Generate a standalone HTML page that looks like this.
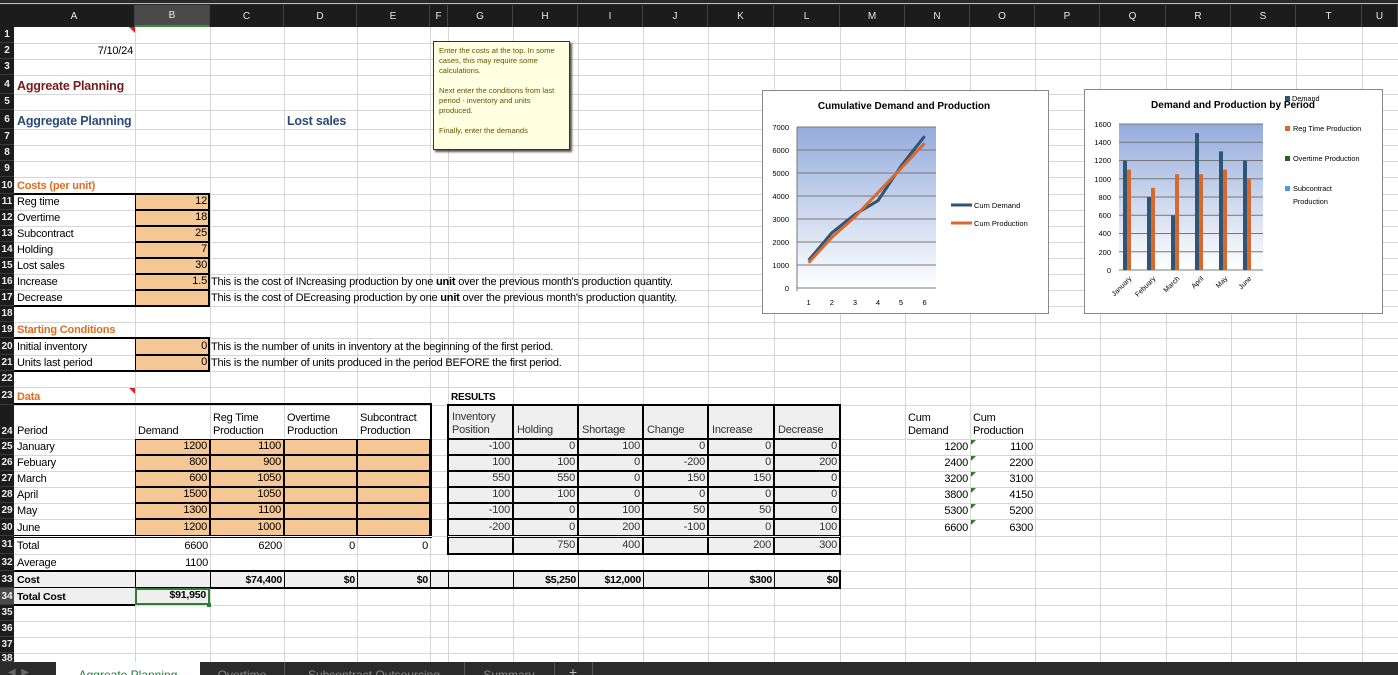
<!DOCTYPE html>
<html><head><meta charset="utf-8">
<style>
*{margin:0;padding:0}
body{width:1398px;height:675px;overflow:hidden;background:#fff;position:relative;font-family:"Liberation Sans Narrow","Liberation Sans",sans-serif;color:#000}
.a{position:absolute}
.vl{position:absolute;top:27px;height:635px;width:1px;background:#d6d6d6}
.hl{position:absolute;left:14px;width:1384px;height:1px;background:#d6d6d6}
.c{position:absolute;box-sizing:border-box;display:flex;align-items:flex-end;padding:0 2px 1px 3px;font-size:11px;white-space:nowrap;line-height:13px;overflow:visible;letter-spacing:-0.2px}
.r{justify-content:flex-end}
.b{font-weight:bold}
.o{background:#f5c794;border:1px solid #000}
.g{background:#efefef;border:1px solid #000;color:#333}
.cA{left:14px;width:121px}.cB{left:135px;width:75px}.cC{left:210px;width:74px}.cD{left:284px;width:73px}.cE{left:357px;width:73px}.cF{left:430px;width:18px}.cG{left:448px;width:65px}.cH{left:513px;width:65px}.cI{left:578px;width:65px}.cJ{left:643px;width:65px}.cK{left:708px;width:66px}.cL{left:774px;width:66px}.cN{left:905px;width:65px}.cO{left:970px;width:65px}
.r1{top:27px;height:16px}.r2{top:43px;height:16px}.r3{top:59px;height:16px}.r4{top:75px;height:19px}.r5{top:94px;height:16px}.r6{top:110px;height:19px}.r7{top:129px;height:16px}.r8{top:145px;height:16px}.r9{top:161px;height:16px}.r10{top:177px;height:17px}
.r11{top:194px;height:16px}.r12{top:210px;height:16px}.r13{top:226px;height:16px}.r14{top:242px;height:16px}.r15{top:258px;height:16px}.r16{top:274px;height:16px}.r17{top:290px;height:16px}.r18{top:306px;height:16px}.r19{top:322px;height:16px}.r20{top:338px;height:17px}.r21{top:355px;height:16px}.r22{top:371px;height:16px}.r23{top:387px;height:18px}.r24{top:405px;height:34px}
.r25{top:439px;height:16px}.r26{top:455px;height:16px}.r27{top:471px;height:16px}.r28{top:487px;height:16px}.r29{top:503px;height:16px}.r30{top:519px;height:17px}.r31{top:536px;height:18px}.r32{top:554px;height:17px}.r33{top:571px;height:17px}.r34{top:588px;height:17px}.r35{top:605px;height:16px}.r36{top:621px;height:16px}.r37{top:637px;height:16px}.r38{top:653px;height:9px}
.rh{position:absolute;left:0;width:14px;background:#1c1c1c;color:#eee;font-size:10px;font-weight:bold;display:flex;align-items:center;justify-content:center;box-sizing:border-box;border-bottom:1px solid #3a3a3a}
.ch{position:absolute;top:5px;height:22px;background:#1c1c1c;color:#e8e8e8;font-size:10px;display:flex;align-items:center;justify-content:center;box-sizing:border-box;border-right:1px solid #444}
.hd{align-items:flex-start;flex-direction:column;justify-content:flex-end}
.gt{position:absolute;width:0;height:0;border-top:5px solid #2e7d1e;border-right:5px solid transparent}
</style></head><body>
<div class="a" style="left:0;top:0;width:1398px;height:5px;background:#2a2a2a"></div>
<div class="a" style="left:0;top:3px;width:1398px;height:1px;background:#bbb"></div>
<div class="vl" style="left:135px"></div><div class="vl" style="left:210px"></div><div class="vl" style="left:284px"></div><div class="vl" style="left:357px"></div><div class="vl" style="left:430px"></div><div class="vl" style="left:448px"></div><div class="vl" style="left:513px"></div><div class="vl" style="left:578px"></div><div class="vl" style="left:643px"></div><div class="vl" style="left:708px"></div><div class="vl" style="left:774px"></div><div class="vl" style="left:840px"></div><div class="vl" style="left:905px"></div><div class="vl" style="left:970px"></div><div class="vl" style="left:1035px"></div><div class="vl" style="left:1100px"></div><div class="vl" style="left:1166px"></div><div class="vl" style="left:1231px"></div><div class="vl" style="left:1296px"></div><div class="vl" style="left:1362px"></div>
<div class="hl" style="top:43px"></div><div class="hl" style="top:59px"></div><div class="hl" style="top:75px"></div><div class="hl" style="top:94px"></div><div class="hl" style="top:110px"></div><div class="hl" style="top:129px"></div><div class="hl" style="top:145px"></div><div class="hl" style="top:161px"></div><div class="hl" style="top:177px"></div><div class="hl" style="top:194px"></div><div class="hl" style="top:210px"></div><div class="hl" style="top:226px"></div><div class="hl" style="top:242px"></div><div class="hl" style="top:258px"></div><div class="hl" style="top:274px"></div><div class="hl" style="top:290px"></div><div class="hl" style="top:306px"></div><div class="hl" style="top:322px"></div><div class="hl" style="top:338px"></div><div class="hl" style="top:355px"></div><div class="hl" style="top:371px"></div><div class="hl" style="top:387px"></div><div class="hl" style="top:405px"></div><div class="hl" style="top:439px"></div><div class="hl" style="top:455px"></div><div class="hl" style="top:471px"></div><div class="hl" style="top:487px"></div><div class="hl" style="top:503px"></div><div class="hl" style="top:519px"></div><div class="hl" style="top:536px"></div><div class="hl" style="top:554px"></div><div class="hl" style="top:571px"></div><div class="hl" style="top:588px"></div><div class="hl" style="top:605px"></div><div class="hl" style="top:621px"></div><div class="hl" style="top:637px"></div><div class="hl" style="top:653px"></div>
<div class="a" style="left:0;top:5px;width:14px;height:22px;background:#1c1c1c"></div>
<div class="ch" style="left:14px;width:121px">A</div>
<div class="ch" style="left:135px;width:75px;background:#4a4a4a;border-bottom:2px solid #3c8a3c">B</div>
<div class="ch" style="left:210px;width:74px">C</div><div class="ch" style="left:284px;width:73px">D</div><div class="ch" style="left:357px;width:73px">E</div><div class="ch" style="left:430px;width:18px">F</div><div class="ch" style="left:448px;width:65px">G</div><div class="ch" style="left:513px;width:65px">H</div><div class="ch" style="left:578px;width:65px">I</div><div class="ch" style="left:643px;width:65px">J</div><div class="ch" style="left:708px;width:66px">K</div><div class="ch" style="left:774px;width:66px">L</div><div class="ch" style="left:840px;width:65px">M</div><div class="ch" style="left:905px;width:65px">N</div><div class="ch" style="left:970px;width:65px">O</div><div class="ch" style="left:1035px;width:65px">P</div><div class="ch" style="left:1100px;width:66px">Q</div><div class="ch" style="left:1166px;width:65px">R</div><div class="ch" style="left:1231px;width:65px">S</div><div class="ch" style="left:1296px;width:66px">T</div><div class="ch" style="left:1362px;width:36px">U</div>
<div class="rh r1">1</div><div class="rh r2">2</div><div class="rh r3">3</div><div class="rh r4">4</div><div class="rh r5">5</div><div class="rh r6">6</div><div class="rh r7">7</div><div class="rh r8">8</div><div class="rh r9">9</div><div class="rh r10">10</div><div class="rh r11">11</div><div class="rh r12">12</div><div class="rh r13">13</div><div class="rh r14">14</div><div class="rh r15">15</div><div class="rh r16">16</div><div class="rh r17">17</div><div class="rh r18">18</div><div class="rh r19">19</div><div class="rh r20">20</div><div class="rh r21">21</div><div class="rh r22">22</div><div class="rh r23">23</div><div class="rh r24" style="align-items:flex-end;padding-bottom:1px">24</div><div class="rh r25">25</div><div class="rh r26">26</div><div class="rh r27">27</div><div class="rh r28">28</div><div class="rh r29">29</div><div class="rh r30">30</div><div class="rh r31">31</div><div class="rh r32">32</div><div class="rh r33">33</div><div class="rh r34" style="background:#4a4a4a">34</div><div class="rh r35">35</div><div class="rh r36">36</div><div class="rh r37">37</div><div class="rh r38" style="align-items:flex-start;overflow:hidden">38</div>

<div class="a" style="left:129px;top:27px;border-top:6px solid #e02020;border-left:6px solid transparent"></div>
<div class="c cA r2 r">7/10/24</div>
<div class="c cA r4 b" style="color:#7a1a1a;font-size:12.5px">Aggreate Planning</div>
<div class="c cA r6 b" style="color:#2c4a7c;font-size:12.5px">Aggregate Planning</div>
<div class="c cD r6 b" style="color:#2c4a7c;font-size:12.5px">Lost sales</div>
<div class="c cA r10 b" style="color:#e46a1c">Costs (per unit)</div>
<div class="c cA r11">Reg time</div><div class="c cA r12">Overtime</div><div class="c cA r13">Subcontract</div><div class="c cA r14">Holding</div><div class="c cA r15">Lost sales</div><div class="c cA r16">Increase</div><div class="c cA r17">Decrease</div>
<div class="c cB r11 r o">12</div><div class="c cB r12 r o">18</div><div class="c cB r13 r o">25</div><div class="c cB r14 r o">7</div><div class="c cB r15 r o">30</div><div class="c cB r16 r o">1.5</div><div class="c cB r17 r o"></div>
<div class="a" style="left:14px;top:193px;width:196px;height:114px;border:2px solid #000;box-sizing:border-box;border-left:none"></div>
<div class="c cC r16" style="padding-left:1px">This is the cost of INcreasing production by one&nbsp;<b>unit</b>&nbsp;over the previous month's production quantity.</div>
<div class="c cC r17" style="padding-left:1px">This is the cost of DEcreasing production by one&nbsp;<b>unit</b>&nbsp;over the previous month's production quantity.</div>
<div class="c cA r19 b" style="color:#e46a1c">Starting Conditions</div>
<div class="c cA r20">Initial inventory</div><div class="c cA r21">Units last period</div>
<div class="c cB r20 r o">0</div><div class="c cB r21 r o">0</div>
<div class="a" style="left:14px;top:337px;width:196px;height:35px;border:2px solid #000;box-sizing:border-box;border-left:none"></div>
<div class="c cC r20" style="padding-left:1px">This is the number of units in inventory at the beginning of the first period.</div>
<div class="c cC r21" style="padding-left:1px">This is the number of units produced in the period BEFORE the first period.</div>

<div class="c cA r23 b" style="color:#e46a1c">Data</div>
<div class="a" style="left:129px;top:388px;border-top:6px solid #e02020;border-left:6px solid transparent"></div>
<div class="c cG r23 b" style="font-size:10px">RESULTS</div>
<div class="c cA r24">Period</div><div class="c cB r24">Demand</div>
<div class="c cC r24 hd"><span>Reg Time</span><span>Production</span></div>
<div class="c cD r24 hd"><span>Overtime</span><span>Production</span></div>
<div class="c cE r24 hd"><span>Subcontract</span><span>Production</span></div>
<div class="c cG r24 hd g"><span>Inventory</span><span>Position</span></div>
<div class="c cH r24 g">Holding</div><div class="c cI r24 g">Shortage</div><div class="c cJ r24 g">Change</div><div class="c cK r24 g">Increase</div><div class="c cL r24 g">Decrease</div>
<div class="c cN r24 hd"><span>Cum</span><span>Demand</span></div>
<div class="c cO r24 hd"><span>Cum</span><span>Production</span></div>
<div class="a" style="left:14px;top:403px;width:418px;height:2px;background:#000"></div>
<div class="a" style="left:430px;top:403px;width:2px;height:134px;background:#000"></div>

<div class="c cA r25">January</div><div class="c cA r26">Febuary</div><div class="c cA r27">March</div><div class="c cA r28">April</div><div class="c cA r29">May</div><div class="c cA r30">June</div>
<div class="c cB r25 r o">1200</div><div class="c cC r25 r o">1100</div><div class="c cD r25 o"></div><div class="c cE r25 o"></div>
<div class="c cB r26 r o">800</div><div class="c cC r26 r o">900</div><div class="c cD r26 o"></div><div class="c cE r26 o"></div>
<div class="c cB r27 r o">600</div><div class="c cC r27 r o">1050</div><div class="c cD r27 o"></div><div class="c cE r27 o"></div>
<div class="c cB r28 r o">1500</div><div class="c cC r28 r o">1050</div><div class="c cD r28 o"></div><div class="c cE r28 o"></div>
<div class="c cB r29 r o">1300</div><div class="c cC r29 r o">1100</div><div class="c cD r29 o"></div><div class="c cE r29 o"></div>
<div class="c cB r30 r o">1200</div><div class="c cC r30 r o">1000</div><div class="c cD r30 o"></div><div class="c cE r30 o"></div>
<div class="a" style="left:14px;top:535px;width:418px;height:3px;border-top:1px solid #000;border-bottom:1px solid #000;background:#fff;box-sizing:border-box"></div>

<div class="c cG r25 r g">-100</div><div class="c cH r25 r g">0</div><div class="c cI r25 r g">100</div><div class="c cJ r25 r g">0</div><div class="c cK r25 r g">0</div><div class="c cL r25 r g">0</div>
<div class="c cG r26 r g">100</div><div class="c cH r26 r g">100</div><div class="c cI r26 r g">0</div><div class="c cJ r26 r g">-200</div><div class="c cK r26 r g">0</div><div class="c cL r26 r g">200</div>
<div class="c cG r27 r g">550</div><div class="c cH r27 r g">550</div><div class="c cI r27 r g">0</div><div class="c cJ r27 r g">150</div><div class="c cK r27 r g">150</div><div class="c cL r27 r g">0</div>
<div class="c cG r28 r g">100</div><div class="c cH r28 r g">100</div><div class="c cI r28 r g">0</div><div class="c cJ r28 r g">0</div><div class="c cK r28 r g">0</div><div class="c cL r28 r g">0</div>
<div class="c cG r29 r g">-100</div><div class="c cH r29 r g">0</div><div class="c cI r29 r g">100</div><div class="c cJ r29 r g">50</div><div class="c cK r29 r g">50</div><div class="c cL r29 r g">0</div>
<div class="c cG r30 r g">-200</div><div class="c cH r30 r g">0</div><div class="c cI r30 r g">200</div><div class="c cJ r30 r g">-100</div><div class="c cK r30 r g">0</div><div class="c cL r30 r g">100</div>
<div class="c cG r31 r g"></div><div class="c cH r31 r g">750</div><div class="c cI r31 r g">400</div><div class="c cJ r31 r g"></div><div class="c cK r31 r g">200</div><div class="c cL r31 r g">300</div>
<div class="a" style="left:447px;top:404px;width:394px;height:151px;border:2px solid #000;box-sizing:border-box"></div>
<div class="a" style="left:448px;top:535px;width:392px;height:3px;border-top:1px solid #000;border-bottom:1px solid #000;box-sizing:border-box;background:#efefef"></div>

<div class="c cN r25 r">1200</div><div class="c cO r25 r">1100</div>
<div class="c cN r26 r">2400</div><div class="c cO r26 r">2200</div>
<div class="c cN r27 r">3200</div><div class="c cO r27 r">3100</div>
<div class="c cN r28 r">3800</div><div class="c cO r28 r">4150</div>
<div class="c cN r29 r">5300</div><div class="c cO r29 r">5200</div>
<div class="c cN r30 r">6600</div><div class="c cO r30 r">6300</div>
<div class="gt" style="left:971px;top:440px"></div><div class="gt" style="left:971px;top:456px"></div><div class="gt" style="left:971px;top:472px"></div><div class="gt" style="left:971px;top:488px"></div><div class="gt" style="left:971px;top:504px"></div><div class="gt" style="left:971px;top:520px"></div>

<div class="c cA r31">Total</div><div class="c cB r31 r">6600</div><div class="c cC r31 r">6200</div><div class="c cD r31 r">0</div><div class="c cE r31 r">0</div>
<div class="c cA r32">Average</div><div class="c cB r32 r">1100</div>

<div class="a" style="left:14px;top:570px;width:827px;height:19px;background:#efefef;border-top:2px solid #000;border-bottom:2px solid #000;border-right:2px solid #000;box-sizing:border-box"></div>
<div class="a" style="left:135px;top:571px;width:1px;height:17px;background:#000"></div><div class="a" style="left:210px;top:571px;width:1px;height:17px;background:#000"></div><div class="a" style="left:284px;top:571px;width:1px;height:17px;background:#000"></div><div class="a" style="left:357px;top:571px;width:1px;height:17px;background:#000"></div><div class="a" style="left:430px;top:571px;width:1px;height:17px;background:#000"></div><div class="a" style="left:448px;top:571px;width:1px;height:17px;background:#000"></div><div class="a" style="left:513px;top:571px;width:1px;height:17px;background:#000"></div><div class="a" style="left:578px;top:571px;width:1px;height:17px;background:#000"></div><div class="a" style="left:643px;top:571px;width:1px;height:17px;background:#000"></div><div class="a" style="left:708px;top:571px;width:1px;height:17px;background:#000"></div><div class="a" style="left:774px;top:571px;width:1px;height:17px;background:#000"></div>
<div class="c cA r33 b" style="font-size:10.5px">Cost</div><div class="c cC r33 r b" style="font-size:10.5px">$74,400</div><div class="c cD r33 r b" style="font-size:10.5px">$0</div><div class="c cE r33 r b" style="font-size:10.5px">$0</div><div class="c cH r33 r b" style="font-size:10.5px">$5,250</div><div class="c cI r33 r b" style="font-size:10.5px">$12,000</div><div class="c cK r33 r b" style="font-size:10.5px">$300</div><div class="c cL r33 r b" style="font-size:10.5px">$0</div>
<div class="a" style="left:14px;top:588px;width:121px;height:18px;background:#efefef;border-bottom:2px solid #000;box-sizing:border-box"></div>
<div class="c cA r34 b" style="font-size:10.5px">Total Cost</div>
<div class="c cB r34 r b" style="font-size:10.5px;background:#efefef;border:2px solid #2e7d32">$91,950</div>
<div class="a" style="left:207px;top:603px;width:4px;height:4px;background:#2e7d32"></div>

<div class="a" style="left:433px;top:41px;width:137px;height:109px;background:#ffffe1;border:1px solid #333;box-shadow:2px 2px 2px #555;box-sizing:border-box;padding:4px 5px;font-family:'Liberation Sans',sans-serif;font-size:7.6px;line-height:10px;color:#6b5200">Enter the costs at the top. In some cases, this may require some calculations.<br><br>Next enter the conditions from last period - inventory and units produced.<br><br>Finally, enter the demands</div>

<svg class="a" style="left:762px;top:90px" width="287" height="224" viewBox="0 0 287 224" font-family="Liberation Sans, sans-serif">
<defs><linearGradient id="g1" x1="0" y1="0" x2="0" y2="1"><stop offset="0" stop-color="#95acdc"/><stop offset="1" stop-color="#ffffff"/></linearGradient></defs>
<rect x="0.5" y="0.5" width="286" height="223" fill="#fff" stroke="#888"/>
<text x="142" y="19" text-anchor="middle" font-size="10" font-weight="bold">Cumulative Demand and Production</text>
<rect x="35" y="37" width="139" height="161" fill="url(#g1)"/>
<g stroke="#777" stroke-width="1"><line x1="35" y1="37" x2="174" y2="37"/><line x1="35" y1="60" x2="174" y2="60"/><line x1="35" y1="83" x2="174" y2="83"/><line x1="35" y1="106" x2="174" y2="106"/><line x1="35" y1="129" x2="174" y2="129"/><line x1="35" y1="152" x2="174" y2="152"/><line x1="35" y1="175" x2="174" y2="175"/><line x1="35" y1="198" x2="174" y2="198"/><line x1="35" y1="37" x2="35" y2="201"/></g>
<g font-size="7.5" text-anchor="end"><text x="27" y="40">7000</text><text x="27" y="63">6000</text><text x="27" y="86">5000</text><text x="27" y="109">4000</text><text x="27" y="132">3000</text><text x="27" y="155">2000</text><text x="27" y="178">1000</text><text x="27" y="201">0</text></g>
<g font-size="7.5" text-anchor="middle"><text x="46.6" y="215">1</text><text x="69.8" y="215">2</text><text x="93" y="215">3</text><text x="116" y="215">4</text><text x="139" y="215">5</text><text x="162.6" y="215">6</text></g>
<polyline points="46.6,170.4 69.8,142.8 93,124.4 116,110.6 139,76.1 162.6,46.2" fill="none" stroke="#2f5476" stroke-width="3"/>
<polyline points="46.6,172.7 69.8,147.4 93,126.7 116,102.6 139,78.4 162.6,53.1" fill="none" stroke="#d8692e" stroke-width="3"/>
<line x1="189" y1="115" x2="210" y2="115" stroke="#2f5476" stroke-width="3"/><text x="212" y="118" font-size="7.5">Cum Demand</text>
<line x1="189" y1="133" x2="210" y2="133" stroke="#d8692e" stroke-width="3"/><text x="212" y="136" font-size="7.5">Cum Production</text>
</svg>

<svg class="a" style="left:1084px;top:89px" width="299" height="225" viewBox="0 0 299 225" font-family="Liberation Sans, sans-serif">
<defs><linearGradient id="g2" x1="0" y1="0" x2="0" y2="1"><stop offset="0" stop-color="#95acdc"/><stop offset="1" stop-color="#ffffff"/></linearGradient></defs>
<rect x="0.5" y="0.5" width="298" height="224" fill="#fff" stroke="#888"/>
<text x="149" y="19" text-anchor="middle" font-size="10" font-weight="bold">Demand and Production by Period</text>
<rect x="35" y="35" width="144" height="146" fill="url(#g2)"/>
<g stroke="#777"><line x1="35" y1="35" x2="179" y2="35"/><line x1="35" y1="53.3" x2="179" y2="53.3"/><line x1="35" y1="71.5" x2="179" y2="71.5"/><line x1="35" y1="89.8" x2="179" y2="89.8"/><line x1="35" y1="108" x2="179" y2="108"/><line x1="35" y1="126.3" x2="179" y2="126.3"/><line x1="35" y1="144.5" x2="179" y2="144.5"/><line x1="35" y1="162.8" x2="179" y2="162.8"/><line x1="35" y1="181" x2="179" y2="181"/></g>
<g font-size="7.5" text-anchor="end"><text x="27" y="38">1600</text><text x="27" y="56">1400</text><text x="27" y="74">1200</text><text x="27" y="93">1000</text><text x="27" y="111">800</text><text x="27" y="129">600</text><text x="27" y="147">400</text><text x="27" y="166">200</text><text x="27" y="184">0</text></g>
<g fill="#2f5476"><rect x="39" y="71.5" width="4" height="109.5"/><rect x="63" y="108" width="4" height="73"/><rect x="87" y="126.3" width="4" height="54.7"/><rect x="111" y="44.1" width="4" height="136.9"/><rect x="135" y="62.4" width="4" height="118.6"/><rect x="159" y="71.5" width="4" height="109.5"/></g>
<g fill="#d8692e"><rect x="43" y="80.6" width="4" height="100.4"/><rect x="67" y="98.9" width="4" height="82.1"/><rect x="91" y="85.2" width="4" height="95.8"/><rect x="115" y="85.2" width="4" height="95.8"/><rect x="139" y="80.6" width="4" height="100.4"/><rect x="163" y="89.8" width="4" height="91.2"/></g>
<g font-size="7" text-anchor="end"><text transform="translate(48,190) rotate(-45)">January</text><text transform="translate(72,190) rotate(-45)">Febuary</text><text transform="translate(96,190) rotate(-45)">March</text><text transform="translate(120,190) rotate(-45)">April</text><text transform="translate(144,190) rotate(-45)">May</text><text transform="translate(168,190) rotate(-45)">June</text></g>
<g font-size="7.3"><rect x="201" y="7" width="5" height="5" fill="#2f5476"/><text x="208" y="12">Demand</text>
<rect x="201" y="37" width="5" height="5" fill="#d8692e"/><text x="209" y="42">Reg Time Production</text>
<rect x="201" y="67" width="5" height="5" fill="#2f5f23"/><text x="209" y="72">Overtime Production</text>
<rect x="201" y="97" width="5" height="5" fill="#4a9ad8"/><text x="209" y="102">Subcontract</text><text x="209" y="115">Production</text></g>
</svg>

<div class="a" style="left:0;top:662px;width:1398px;height:13px;background:#2b2b2b;overflow:hidden;font-family:'Liberation Sans',sans-serif;font-size:12px">
<div class="a" style="left:8px;top:5px;color:#666;font-size:10px">◀&nbsp;&nbsp;▶</div>
<div class="a" style="left:56px;top:0;width:144px;height:13px;background:#fff;color:#1e7a3a;text-align:center;line-height:26px">Aggreate Planning</div>
<div class="a" style="left:200px;top:0;width:84px;height:13px;border-right:1px solid #555;color:#888;text-align:center;line-height:26px">Overtime</div>
<div class="a" style="left:284px;top:0;width:180px;height:13px;border-right:1px solid #555;color:#888;text-align:center;line-height:26px">Subcontract Outsourcing</div>
<div class="a" style="left:464px;top:0;width:90px;height:13px;border-right:1px solid #555;color:#888;text-align:center;line-height:26px">Summary</div>
<div class="a" style="left:554px;top:0;width:38px;height:13px;border-right:1px solid #555;color:#bbb;text-align:center;line-height:20px;font-size:14px">+</div>
</div>
</body></html>
